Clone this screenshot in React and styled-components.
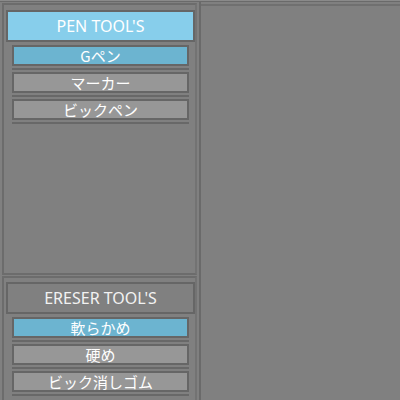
import React from "react";
import styled, { createGlobalStyle } from "styled-components";

const Global = createGlobalStyle`
  html, body { margin: 0; padding: 0; background: #808080; }
  body { font-family: "Noto Sans CJK JP", "Noto Sans", sans-serif; overflow: hidden; }
`;

const Frame = styled.div`
  display: flex;
  width: 400px;
  height: 400px;
  box-sizing: border-box;
  border-top: 1px solid #8a8a8a;
  overflow: hidden;
`;

const LeftColumn = styled.div`
  width: 199px;
  flex: none;
  display: flex;
  flex-direction: column;
  border-top: 1px solid #6a6a6a;
`;

const Panel = styled.section`
  box-sizing: border-box;
  margin: 1px 2px 0 2px;
  width: 195px;
  height: ${(p) => p.$height}px;
  border: 2px solid #6c6c6c;
  border-right-color: #737373;
  padding: ${(p) => p.$padTop}px 0 0 2px;
  display: flex;
  flex-direction: column;
  flex: none;
`;

const Header = styled.div`
  box-sizing: border-box;
  width: 189px;
  height: 32px;
  border: 2px solid #666;
  background: ${(p) => (p.$active ? "#87ceeb" : "#808080")};
  color: ${(p) => (p.$active ? "#ffffff" : "#f2f2f2")};
  font-family: "Noto Sans", "Noto Sans CJK JP", sans-serif;
  font-size: 16px;
  display: flex;
  align-items: center;
  justify-content: center;
  margin-bottom: 3px;
`;

const List = styled.div`
  display: flex;
  flex-direction: column;
  margin-left: 6px;
  width: 177px;
`;

const Item = styled.div`
  display: flex;
  flex-direction: column;
`;

const Button = styled.div`
  box-sizing: border-box;
  height: 21px;
  border: 2px solid #666;
  background: ${(p) => (p.$selected ? "#6cb4d0" : "#979797")};
  color: #fff;
  font-size: 15px;
  line-height: 17px;
  display: flex;
  align-items: center;
  justify-content: center;
  margin-bottom: 2px;
`;

const Separator = styled.div`
  height: 2px;
  background: #686868;
  margin-bottom: 2px;
`;

const RightPane = styled.div`
  flex: 1;
  border-left: 2px solid #6a6a6a;
  border-top: 1px solid #6a6a6a;
  box-shadow: inset 0 3px 0 -1px #808080, inset 0 4px 0 0 #707070;
  background: #808080;
`;

const groups = [
  { title: "PEN TOOL'S", active: true, height: 272, padTop: 5, items: ["Gペン", "マーカー", "ビックペン"] },
  { title: "ERESER TOOL'S", active: false, height: 140, padTop: 4, items: ["軟らかめ", "硬め", "ビック消しゴム"] },
];

export default function App() {
  return (
    <>
      <Global />
      <Frame>
        <LeftColumn>
          {groups.map((g) => (
            <Panel key={g.title} $height={g.height} $padTop={g.padTop}>
              <Header $active={g.active}>{g.title}</Header>
              <List>
                {g.items.map((it, i) => (
                  <Item key={it}>
                    <Button $selected={i === 0}>{it}</Button>
                    <Separator />
                  </Item>
                ))}
              </List>
            </Panel>
          ))}
        </LeftColumn>
        <RightPane />
      </Frame>
    </>
  );
}
